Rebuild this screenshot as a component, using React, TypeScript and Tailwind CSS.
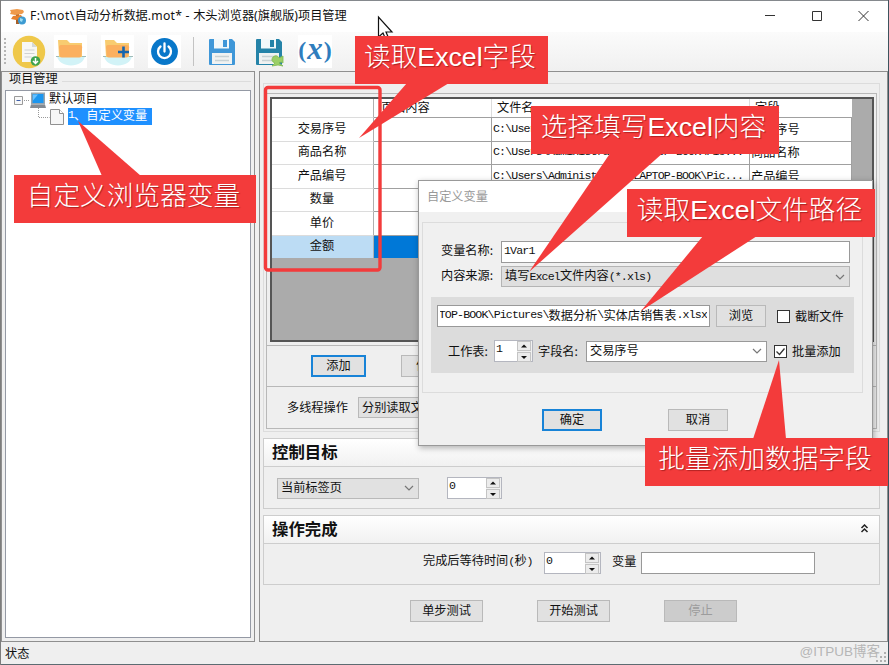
import type { ReactNode } from "react";
import clsx from "clsx";

const FIELDS = ["交易序号", "商品名称", "产品编号", "数量", "单价", "金额"];
const FILE_PATH = "C:\\Users\\Administrator.LAPTOP-BOOK\\Pic...";

// Half-width text of the system font, set next to full-width Chinese characters.
function Mono({ children }: { children: ReactNode }) {
  return (
    <span className="font-['Liberation_Mono','Noto_Sans_CJK_SC',monospace] text-[11.600px] tracking-[-0.860px]">
      {children}
    </span>
  );
}

function Button(props: { label: string; className?: string; primary?: boolean; disabled?: boolean }) {
  return (
    <button
      type="button"
      disabled={props.disabled}
      className={clsx(
        "flex h-[22px] shrink-0 items-center justify-center whitespace-nowrap pb-px",
        props.disabled ? "bg-[#cccccc] text-[#9c9c9c]" : "bg-[#e1e1e1]",
        props.primary ? "border-2 border-[#1883d7]" : "border border-[#b9b9b9]",
        props.className
      )}
    >
      {props.label}
    </button>
  );
}

function Chevron() {
  return (
    <svg width="10" height="6" viewBox="0 0 10 6" fill="none" stroke="#777" strokeWidth="1.2" className="ml-auto shrink-0">
      <path d="M1 1l4 4 4-4" />
    </svg>
  );
}

function Combo(props: { className: string; children: ReactNode }) {
  return (
    <div className={clsx("flex h-[21px] shrink-0 items-center whitespace-nowrap border pr-1 pl-[3px]", props.className)}>
      <span className="pb-px">{props.children}</span>
      <Chevron />
    </div>
  );
}

function Spinner(props: { value: string; className: string }) {
  return (
    <div className={clsx("flex h-[22px] shrink-0 border border-[#b4b6bf] bg-white", props.className)}>
      <span className="pl-px">
        <Mono>{props.value}</Mono>
      </span>
      <div className="ml-auto flex w-[15px] flex-col gap-px bg-[#f0f0f0] pb-px pr-px">
        {["M3 5.5h6L6 2.5z", "M3 3h6L6 6z"].map((d) => (
          <div key={d} className="flex flex-1 items-center justify-center border border-[#c4c4c4] bg-[#ececec]">
            <svg width="12" height="8" viewBox="0 0 12 8" className="shrink-0">
              <path d={d} fill="#111" />
            </svg>
          </div>
        ))}
      </div>
    </div>
  );
}

function Checkbox({ label, checked, className }: { label: string; checked?: boolean; className?: string }) {
  return (
    <div className={clsx("flex shrink-0 items-center gap-[5px] whitespace-nowrap", className)}>
      <span className="flex size-[13px] items-center justify-center border border-[#333] bg-white">
        {checked && (
          <svg width="11" height="11" viewBox="0 0 11 11" fill="none" stroke="#333" strokeWidth="1.3">
            <path d="M1.5 5.5l3 3 5-6" />
          </svg>
        )}
      </span>
      {label}
    </div>
  );
}

function TitleBar() {
  return (
    <header className="flex h-8 shrink-0 items-center border-t border-[#85898d] bg-white pl-2">
      <svg width="18" height="18" viewBox="0 0 18 18">
        <path d="M7 2h3v14H7z" fill="#a65f28" />
        <path d="M1 2l7-1 6 1 1 2-2 2-7 1-5-1 1-2z" fill="#ef9a4b" />
        <path d="M4 8l8-1 2 3-7 2-5-1z" fill="#e5812f" />
        <circle cx="13" cy="12.5" r="4" fill="#3d9bd2" />
        <path d="M11 10l3 1-1 3-2-1z" fill="#9bdcf3" />
      </svg>
      <h1 className="ml-[3px] whitespace-nowrap pb-px font-['Noto_Sans','Noto_Sans_CJK_SC',sans-serif] text-[12.200px]">
        <span className="tracking-[0.400px]">F:\mot\</span>自动分析数据
        <span className="tracking-[0.250px]">.mot* - </span>木头浏览器(旗舰版)项目管理
      </h1>
      <svg width="104" height="12" viewBox="0 0 104 12" fill="none" stroke="#333" strokeWidth="1" className="mr-[19px] mb-px ml-auto">
        <path d="M0 5.500h10M47.500 1.500h9v9h-9zM93.500 1l10 10M103.500 1l-10 10" />
      </svg>
    </header>
  );
}

function FolderIcon({ plus }: { plus?: boolean }) {
  return (
    <svg width="33" height="33" viewBox="0 0 33 33" className="bg-white">
      <path d="M3 21h28c-1 6-7 9.500-14 9.500S4 27 3 21z" fill="#d2f3f7" />
      <path d="M2 21.500h30" stroke="#9fbcb9" />
      <path d="M4 5h9l3 3h12v14H5z" fill="#f8cc70" />
      <path d="M5 12q0-2 2-2h19q2 0 2.200 2l-1 9q-.2 1.500-2 1.500H8q-2 0-2.200-1.500z" fill="#fbb05f" />
      {plus && <path d="M17 17h11M22.500 11.500v11" stroke="#1665ad" strokeWidth="2.600" />}
    </svg>
  );
}

function SaveIcon({ shared }: { shared?: boolean }) {
  return (
    <svg width="30" height="30" viewBox="0 0 30 30">
      <path d="M2 3q0-1 1-1h22l3 3v22q0 1-1 1H3q-1 0-1-1z" fill={shared ? "#2583a8" : "#3f97d8"} />
      <path d="M7 2h15v9.500H7z" fill="#f2f8fa" />
      <path d="M16 3h4v7h-4z" fill={shared ? "#2583a8" : "#3f97d8"} />
      <path d="M5 16h20v11H5z" fill="#f0f2f2" />
      <path d="M8 19.500h14M8 23.500h14" stroke="#c7d1d4" strokeWidth="1.500" />
      {shared && (
        <path
          d="M19 20q4-3 6 1l4-2v7q-2-2-4 0l4 3-5-1-6 1 3-3q-5-2-2-6z"
          fill="#9bcf68"
          stroke="#7fb950"
          strokeWidth=".8"
        />
      )}
    </svg>
  );
}

function Toolbar() {
  return (
    <div className="flex h-[39px] shrink-0 items-center bg-gradient-to-b from-[#fbfbfb] to-[#f0f0f0] pl-[3px]">
      <div className="h-[27px] w-[2px] bg-[repeating-linear-gradient(to_bottom,#b5b5b5_0_2px,transparent_2px_4px)]" />
      <svg width="34" height="34" viewBox="0 0 34 34" className="ml-[6px]">
        <circle cx="17" cy="17" r="16.200" fill="#efc84a" />
        <path d="M10 7h10l5 5v15H10z" fill="#f7f7f4" />
        <path d="M20 7v5h5z" fill="#d5d8d9" />
        <path d="M12.500 15h10M12.500 18.500h10M12.500 22h7" stroke="#d0d2d2" strokeWidth="1.200" />
        <circle cx="23.500" cy="26" r="4.800" fill="#3fa34f" />
        <path d="M23.500 23v5M21 26l2.500 2.500L26 26" fill="none" stroke="#fff" strokeWidth="1.500" />
      </svg>
      <div className="ml-[8px]">
        <FolderIcon />
      </div>
      <div className="ml-[14px]">
        <FolderIcon plus />
      </div>
      <svg width="33" height="33" viewBox="0 0 33 33" className="ml-[14px] bg-white">
        <circle cx="16.500" cy="16.500" r="13.400" fill="#0877c9" />
        <path d="M12.500 11.500a6.500 6.500 0 1 0 8 0M16.500 8.500v8" fill="none" stroke="#fff" strokeWidth="2.300" strokeLinecap="round" />
      </svg>
      <div className="ml-[12px] h-[29px] w-px bg-[#c3c3c3]" />
      <div className="ml-[13px]">
        <SaveIcon />
      </div>
      <div className="ml-[17px]">
        <SaveIcon shared />
      </div>
      <div className="ml-[14px] flex h-[33px] w-[34px] items-center justify-center bg-white pb-[3px] font-['Liberation_Serif',serif] text-[24px] font-bold text-[#2f7dbd]">
        <span>(</span>
        <i className="mx-px -mt-[3px] text-[31px]">x</i>
        <span>)</span>
      </div>
    </div>
  );
}

function ProjectTree() {
  return (
    <section className="flex h-[571px] w-[254px] shrink-0 flex-col border border-[#8f8f8f] pr-[3px] pl-[3px]">
      <div className="flex h-[18px] items-center">
        <span className="w-[4px]" />
        <span className="-mt-[5px] whitespace-nowrap">项目管理</span>
        <span className="ml-1 h-px flex-1 bg-[#dcdcdc]" />
      </div>
      <div className="h-[548px] border border-[#9499a4] bg-white">
        <div className="flex h-[17px] items-center">
          <svg width="42" height="18" viewBox="0 0 42 18" className="shrink-0">
            <path d="M8.500 5.500h8v8h-8z" fill="#f8f8f8" stroke="#9a9a9a" />
            <path d="M10.500 9.500h4" stroke="#3d5ea8" />
            <path d="M18 9.500h6" stroke="#999" strokeDasharray="1 1" />
            <path d="M25 1.500h14v12H25z" fill="#98a4ae" />
            <path d="M26.500 3h11v9h-11z" fill="#1c96ef" />
            <path d="M27 3.500h5l-5 6z" fill="#67c1ff" />
            <path d="M25 13.500h14l1 3.500H24z" fill="#858b92" />
          </svg>
          <span className="ml-[1px] whitespace-nowrap pb-[3px]">默认项目</span>
        </div>
        <div className="flex h-[17px] items-center">
          <svg width="61" height="18" viewBox="0 0 61 18" className="shrink-0">
            <path d="M32.500 0v9.500h11" fill="none" stroke="#999" strokeDasharray="1 1" />
            <path d="M44.500 1.500h9l4 4v11h-13z" fill="#f6f6f6" stroke="#909090" />
            <path d="M53.500 1.500v4h4" fill="#fff" stroke="#909090" />
          </svg>
          <span className="ml-[1px] flex h-[17px] w-[84px] items-center whitespace-nowrap bg-[#1e90ff] pb-[3px] text-white">
            <Mono>1</Mono>、自定义变量
          </span>
        </div>
      </div>
    </section>
  );
}

function DataGrid() {
  return (
    <div className="h-[245px] w-[604px] border-2 border-[#555] bg-[#ababab]">
      <div className="flex h-[18px] w-[580px] bg-white">
        <span className="h-full w-[102px] border-r border-[#b0b0b0]" />
        <span className="h-full w-[118px] border-r border-[#dcdcdc] pl-[7px] leading-[16px]">页面内容</span>
        <span className="h-full w-[258px] border-r border-[#dcdcdc] pl-[5px] leading-[16px]">文件名</span>
        <span className="pl-[5px] leading-[16px]">字段</span>
      </div>
      {FIELDS.map((field, i) => {
        const selected = i === FIELDS.length - 1;
        return (
          <div key={field} className="flex h-[23.500px] w-[580px]">
            <span
              className={clsx(
                "flex w-[102px] items-center justify-center border-t border-r border-t-[#dcdcdc] border-r-[#b0b0b0] pr-px pb-[3px]",
                selected ? "bg-[#bcdcf4]" : "bg-white"
              )}
            >
              {field}
            </span>
            <span className={clsx("w-[118px] border-t border-r border-[#a0a0a0]", selected ? "bg-[#0078d7]" : "bg-white")} />
            <span className="flex w-[258px] items-center border-t border-r border-[#a0a0a0] bg-white pb-px pl-px">
              <Mono>{FILE_PATH}</Mono>
            </span>
            <span className="flex flex-1 items-center border-t border-r border-[#a0a0a0] bg-white pb-px pl-px">{field}</span>
          </div>
        );
      })}
    </div>
  );
}

function SectionHeader({ title, children }: { title: string; children?: ReactNode }) {
  return (
    <div className="flex h-7 items-center justify-between border-b border-[#cdcdcd] bg-gradient-to-b from-white to-[#f1f1f1] pr-[10px] pl-2">
      <h2 className="pb-[3px] text-[16.400px] font-bold">{title}</h2>
      {children}
    </div>
  );
}

function EditorPanel() {
  return (
    <section className="ml-1 h-[571px] w-[629px] shrink-0 border border-[#8f8f8f] pt-[11px] pl-[3px]">
      <div className="h-[349px] w-[617px] border border-[#dcdcdc] pt-[9px] pl-[2px]">
        <div className="w-[611px] border border-[#b8b8b8]">
          <div className="h-[252px] border-b border-[#b8b8b8] pt-[3px] pl-[3px]">
            <DataGrid />
          </div>
          <div className="flex h-[41px] items-center border-b border-[#b8b8b8] pl-[44px]">
            <Button label="添加" primary className="w-[55px]" />
            <Button label="修改" className="ml-[35px] w-[55px]" />
          </div>
          <div className="flex h-[41px] items-center pl-[20px]">
            <span className="w-[71px] pb-px">多线程操作</span>
            <Combo className="w-[140px] border-[#b9b9b9] bg-[#e1e1e1]">分别读取文件</Combo>
          </div>
        </div>
      </div>

      <div className="mt-[6px] h-[71px] w-[617px] border border-[#cdcdcd]">
        <SectionHeader title="控制目标" />
        <div className="flex items-center pt-[10px] pl-[13px]">
          <Combo className="w-[142px] border-[#b9b9b9] bg-[#e1e1e1]">当前标签页</Combo>
          <Spinner value="0" className="ml-[28px] w-[55px]" />
        </div>
      </div>

      <div className="mt-[6px] h-[70px] w-[617px] border border-[#cdcdcd]">
        <SectionHeader title="操作完成">
          <svg width="9" height="9" viewBox="0 0 9 9" fill="none" stroke="#222" strokeWidth="1.500" className="-mt-[3px]">
            <path d="M1.500 4l3-3 3 3M1.500 8l3-3 3 3" />
          </svg>
        </SectionHeader>
        <div className="flex items-center pt-[7px] pl-[159px]">
          <span className="w-[121px] whitespace-nowrap pb-[3px]">
            完成后等待时间<Mono>(</Mono>秒<Mono>)</Mono>
          </span>
          <Spinner value="0" className="w-[57px]" />
          <span className="ml-[11px] w-[29px] pb-[3px]">变量</span>
          <span className="mt-px h-[22px] w-[174px] border border-[#999] bg-white" />
        </div>
      </div>

      <div className="mt-[15px] flex pl-[147px]">
        <Button label="单步测试" className="w-[73px]" />
        <Button label="开始测试" className="ml-[54px] w-[73px]" />
        <Button label="停止" disabled className="ml-[54px] w-[73px]" />
      </div>
    </section>
  );
}

function VariableDialog() {
  return (
    <div className="absolute top-[180px] left-[418px] h-[266px] w-[455px] border border-[#999] bg-[#f0f0f0] shadow-[1px_2px_6px_rgba(0,0,0,0.3)]">
      <div className="flex h-[31px] items-center bg-white pl-2 text-[#999]">自定义变量</div>
      <div className="mt-[10px] ml-[3px] h-[171px] w-[441px] border border-[#dcdcdc] pt-[18px]">
        <div className="flex items-center pl-[18px]">
          <span className="w-[60px] pb-[3px]">变量名称:</span>
          <span className="flex h-[22px] w-[349px] items-center border border-[#999] bg-white pb-[2px] pl-[2px]">
            <Mono>1Var1</Mono>
          </span>
        </div>
        <div className="mt-[3px] flex items-center pl-[18px]">
          <span className="w-[60px] pb-[2px]">内容来源:</span>
          <Combo className="w-[349px] border-[#b4b4b4] bg-[#dfdfdf]">
            填写<Mono>Excel</Mono>文件内容<Mono>(*.xls)</Mono>
          </Combo>
        </div>

        <div className="mt-[10px] ml-2 h-[76px] w-[423px] bg-[#dcdcdc] pt-[8px] pl-[6px]">
          <div className="flex items-center">
            <div className="flex h-[22px] w-[273px] items-center justify-end border border-[#999] bg-white px-[2px] pb-[2px]">
              <div className="flex items-center justify-end overflow-hidden whitespace-nowrap">
                <Mono>TOP-BOOK\Pictures\</Mono>数据分析<Mono>\</Mono>实体店销售表<Mono>.xlsx</Mono>
              </div>
            </div>
            <Button label="浏览" className="ml-[6px] w-[50px]" />
            <Checkbox label="截断文件" className="ml-[11px]" />
          </div>
          <div className="mt-[13px] flex items-center pl-[11px]">
            <span className="w-[46px] whitespace-nowrap">工作表:</span>
            <Spinner value="1" className="w-[39px]" />
            <span className="ml-[5px] w-[48px] whitespace-nowrap">字段名:</span>
            <Combo className="w-[181px] border-[#999] bg-white">交易序号</Combo>
            <Checkbox label="批量添加" checked className="ml-[7px]" />
          </div>
        </div>
      </div>
      <div className="mt-[16px] flex pl-[123px]">
        <Button label="确定" primary className="w-[60px]" />
        <Button label="取消" className="ml-[66px] w-[60px]" />
      </div>
    </div>
  );
}

function Callout({ children, className }: { children: ReactNode; className: string }) {
  return (
    <div
      className={clsx(
        "absolute flex h-[48px] items-center justify-center whitespace-nowrap bg-[#f33b3b] pr-[3px] pb-[6px] font-['Liberation_Sans','Noto_Sans_CJK_SC',sans-serif] text-[26.700px] font-light text-white [text-shadow:1px_1px_1px_rgba(90,0,0,0.45)]",
        className
      )}
    >
      {children}
    </div>
  );
}

function Annotations() {
  return (
    <>
      <svg width="889" height="665" viewBox="0 0 889 665" className="pointer-events-none absolute top-0 left-0">
        <rect x="265.500" y="87.500" width="114.500" height="182.500" rx="2.500" fill="none" stroke="#f33b3b" strokeWidth="3.400" />
        <g fill="#f33b3b">
          <path d="M359 138l48-55h42z" />
          <path d="M529 272l82-120h53z" />
          <path d="M641 311l62-75h54z" />
          <path d="M779 360l-26 79h33z" />
          <path d="M78 121l24 55h39z" />
        </g>
        <path d="M378.500 17v20l4.500-4 3 7 3-1-3-7h6z" fill="#fff" stroke="#111" strokeWidth="1.200" />
      </svg>
      <Callout className="top-[36px] left-[355px] w-[193px]">读取Excel字段</Callout>
      <Callout className="top-[106px] left-[531px] w-[248px]">选择填写Excel内容</Callout>
      <Callout className="top-[189px] left-[627px] w-[248px]">读取Excel文件路径</Callout>
      <Callout className="top-[438px] left-[645px] w-[243px]">批量添加数据字段</Callout>
      <Callout className="top-[175px] left-[14px] w-[242px]">自定义浏览器变量</Callout>
    </>
  );
}

function StatusBar() {
  return (
    <footer className="flex h-[23px] shrink-0 items-center border-b border-[#5c6c72] pl-1">
      <span>状态</span>
      <span className="mb-[3px] ml-auto whitespace-nowrap font-['Liberation_Sans','Noto_Sans_CJK_SC',sans-serif] text-[13.500px] text-[#b6b6b6]">
        @ITPUB博客
      </span>
      <svg width="11" height="11" viewBox="0 0 11 11" fill="#b0b0b0" className="mt-2 -ml-[4px] mr-px">
        <path d="M8 0h2v2H8zM4 4h2v2H4zM8 4h2v2H8zM0 8h2v2H0zM4 8h2v2H4zM8 8h2v2H8z" />
      </svg>
    </footer>
  );
}

export default function App() {
  return (
    <main className="relative flex h-[665px] w-[889px] flex-col overflow-hidden border-r border-l border-r-[#3d545e] border-l-[#7c7c7c] bg-[#efefef] font-['Noto_Sans_CJK_SC',sans-serif] text-[12.200px] leading-none text-[#111]">
      <TitleBar />
      <Toolbar />
      <div className="flex h-[571px] shrink-0">
        <ProjectTree />
        <EditorPanel />
      </div>
      <StatusBar />
      <div className="absolute top-0 -left-px">
        <VariableDialog />
        <Annotations />
      </div>
    </main>
  );
}
